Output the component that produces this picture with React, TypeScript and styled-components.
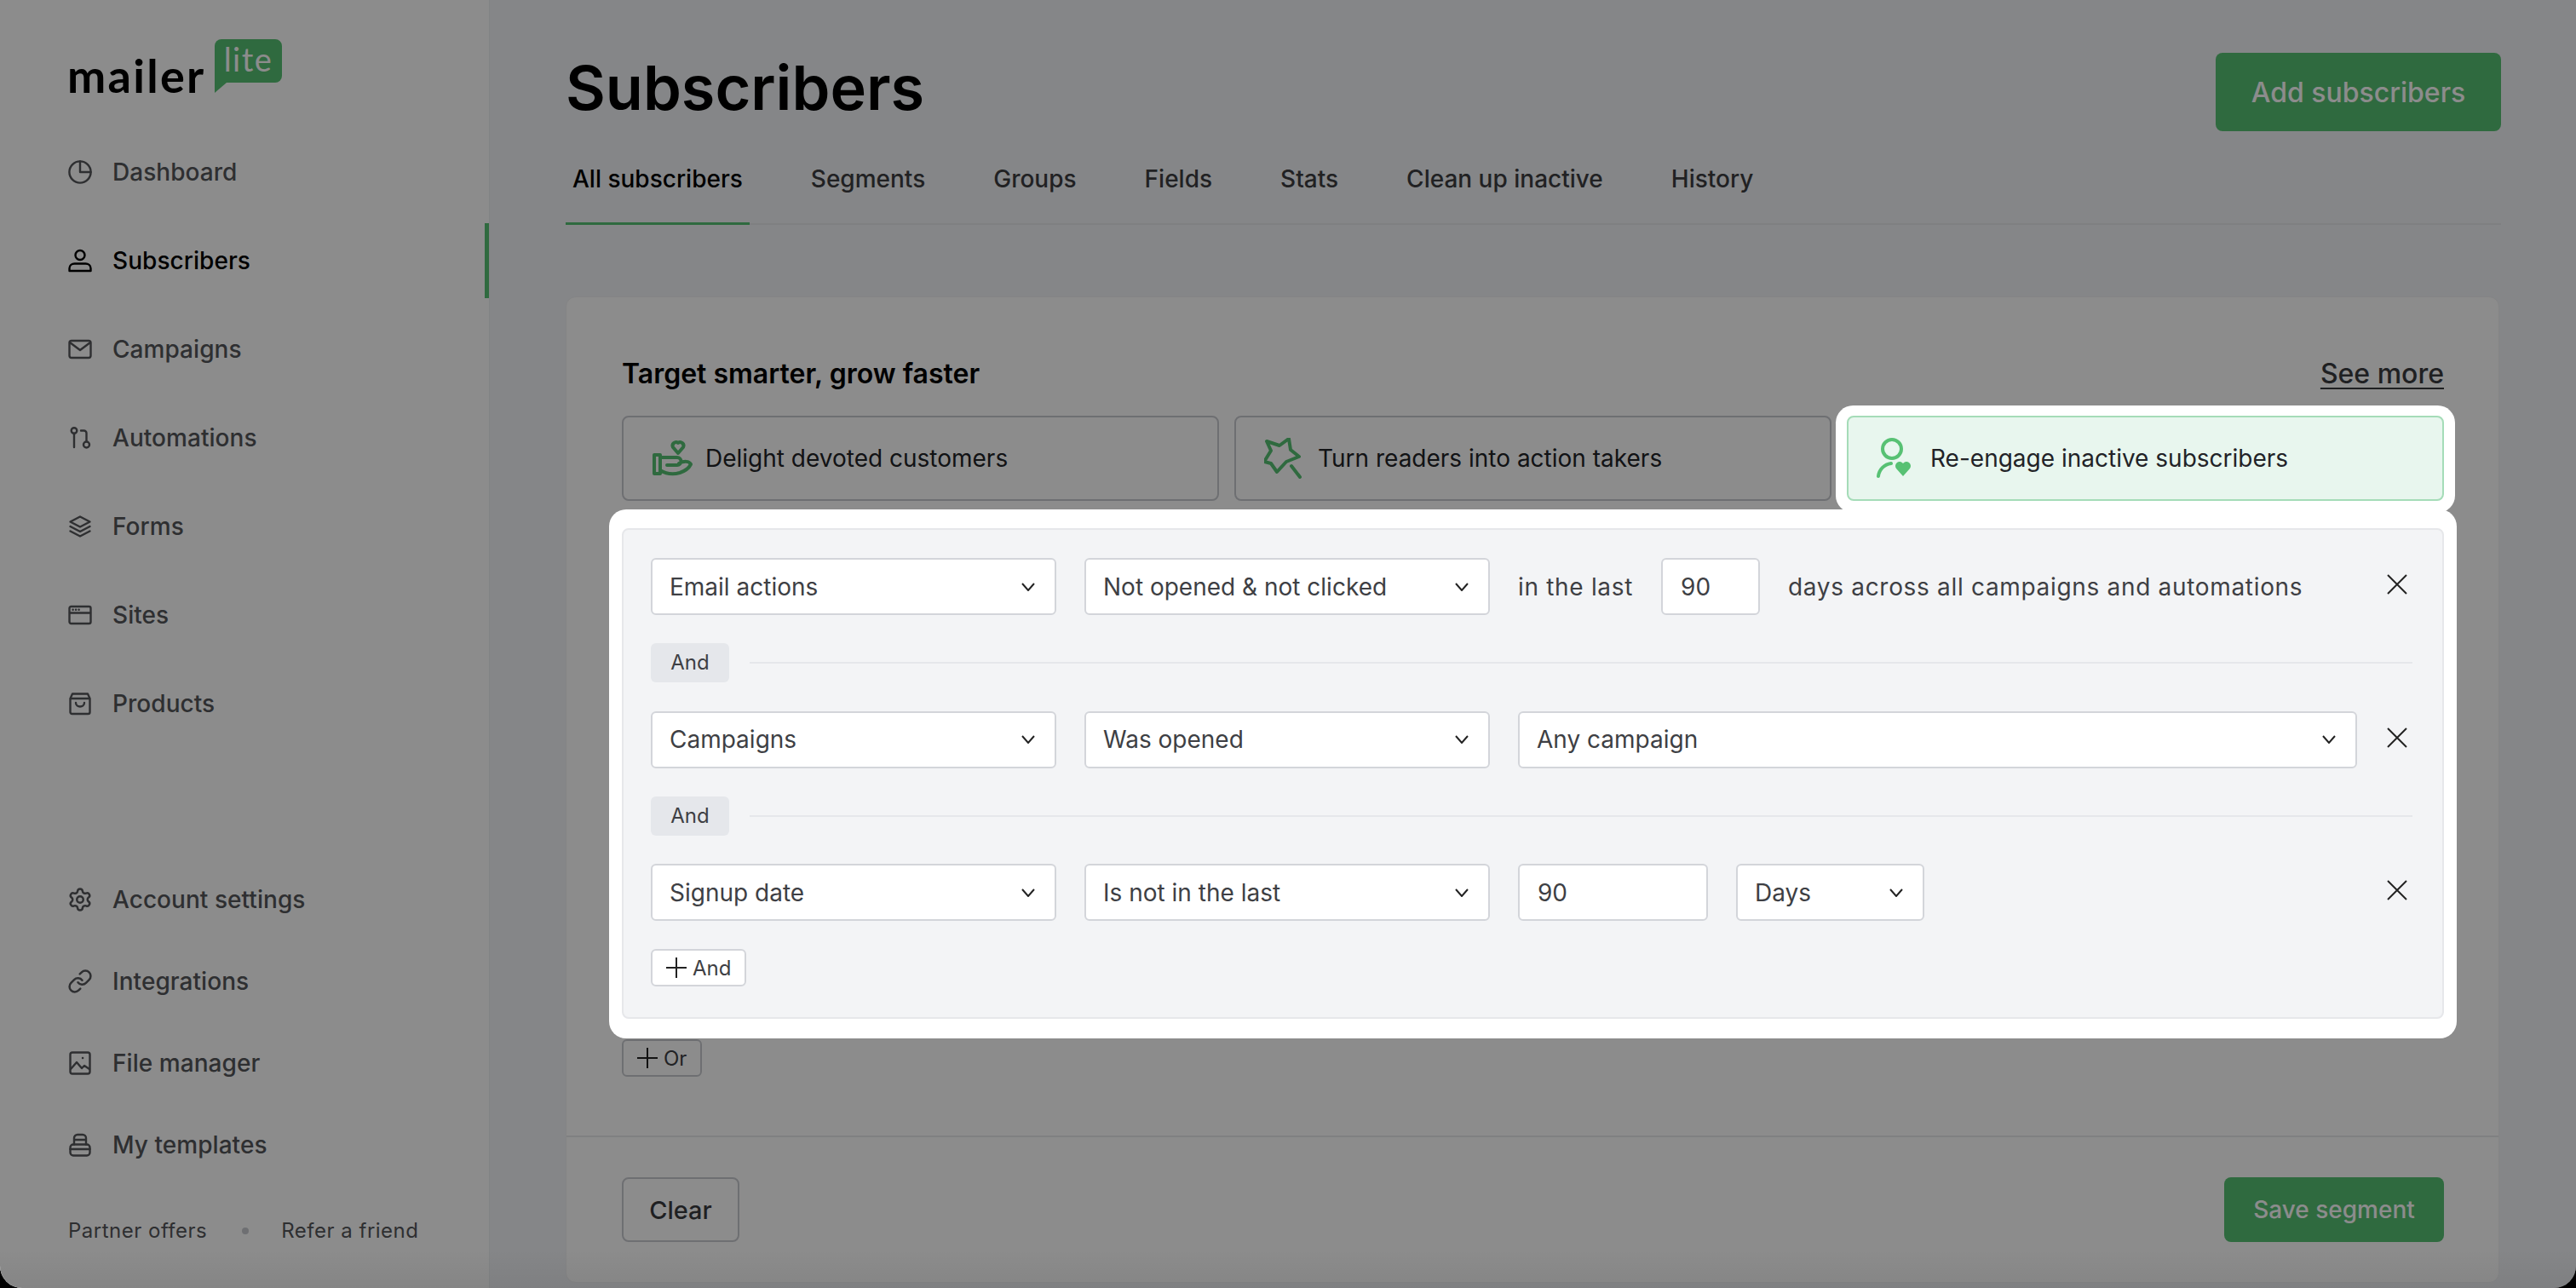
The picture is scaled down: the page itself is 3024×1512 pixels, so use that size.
import React from "react";
import styled, { createGlobalStyle } from "styled-components";
import { Settings, Link as LinkIcon } from "lucide-react";

const Global = createGlobalStyle`
  html, body { margin: 0; padding: 0; background: #000; overflow: hidden; }
  * { box-sizing: border-box; }
  body { font-family: Inter, "Liberation Sans", sans-serif; }
`;

const Frame = styled.div`
  position: relative;
  width: 3024px;
  height: 1512px;
  display: flex;
  overflow: hidden;
  background: #f2f4f7;
  border-radius: 0 0 26px 26px;
`;

const Overlay = styled.div`
  position: absolute;
  inset: 0;
  z-index: 10;
  background: linear-gradient(to bottom, rgba(0, 0, 0, 0) 97%, rgba(0, 0, 0, 0.05) 100%), rgba(0, 0, 0, 0.45);
`;

const Sidebar = styled.aside`
  width: 575px;
  flex: none;
  height: 100%;
  background: #fff;
  border-right: 1px solid #eceef0;
  display: flex;
  flex-direction: column;
`;

const LogoRow = styled.div`
  height: 158px;
  padding: 46px 0 0 79px;
  display: flex;
  align-items: flex-start;
`;

const LogoWord = styled.span`
  width: 173px;
  flex: none;
  font-family: Lato, sans-serif;
  font-weight: 700;
  font-size: 54px;
  line-height: 58px;
  letter-spacing: 2.3px;
  color: #000;
  margin-top: 14px;
`;

const LogoBubble = styled.span`
  position: relative;
  width: 79px;
  height: 51px;
  background: #57c173;
  border-radius: 8px 8px 8px 0;
  color: #fff;
  font-family: Lato, sans-serif;
  font-size: 38px;
  line-height: 46px;
  letter-spacing: 1.5px;
  text-align: center;
  &::after {
    content: "";
    position: absolute;
    left: 0;
    top: 100%;
    border-top: 12px solid #57c173;
    border-right: 14px solid transparent;
  }
`;

const NavList = styled.nav<{ $gap: number }>`
  display: flex;
  flex-direction: column;
  gap: ${(p) => p.$gap}px;
`;

const BottomNav = styled(NavList)`
  margin-top: auto;
`;

const NavItem = styled.a<{ $active?: boolean }>`
  height: 88px;
  display: flex;
  align-items: center;
  gap: 24px;
  padding-left: 80px;
  font-size: 28px;
  font-weight: 450;
  letter-spacing: 0.05px;
  color: ${(p) => (p.$active ? "#000" : "#55565a")};
  border-right: 5px solid ${(p) => (p.$active ? "#57c173" : "transparent")};
  svg {
    flex: none;
    width: 28px;
    height: 28px;
    stroke: currentColor;
    fill: none;
    stroke-width: 2.4;
    stroke-linecap: round;
    stroke-linejoin: round;
  }
`;

const GearIcon = styled(Settings)`
  && {
    width: 30px;
    height: 30px;
    margin: -1px;
    stroke-width: 2;
  }
`;

const ChainIcon = styled(LinkIcon)`
  && {
    width: 30px;
    height: 30px;
    margin: -1px;
    stroke-width: 2;
  }
`;

const SideFooter = styled.div`
  height: 95px;
  margin-top: 29px;
  padding: 4px 0 0 80px;
  display: flex;
  align-items: flex-start;
  font-size: 24px;
  letter-spacing: 0.5px;
  color: #55565a;
  line-height: 48px;
`;

const FooterDot = styled.i`
  width: 8px;
  height: 8px;
  border-radius: 50%;
  background: #c9cbd0;
  margin: 20px 38px 0 41px;
`;

const Main = styled.main`
  flex: 1;
  min-width: 0;
  padding: 62px 88px 0 89px;
  display: flex;
  flex-direction: column;
`;

const PageHead = styled.header`
  height: 92px;
  display: flex;
  align-items: center;
  justify-content: space-between;
`;

const Title = styled.h1`
  margin: 0 0 10px;
  font-size: 72px;
  line-height: 80px;
  font-weight: 600;
  color: #000;
`;

const PrimaryButton = styled.button<{ $w: number; $h: number }>`
  width: ${(p) => p.$w}px;
  height: ${(p) => p.$h}px;
  border: 0;
  border-radius: 8px;
  background: #57c173;
  color: #fff;
  font: ${(p) => (p.$h > 80 ? "500 32px" : "450 28px")} Inter, sans-serif;
`;

const Tabs = styled.div`
  margin-top: 16px;
  height: 94px;
  display: flex;
  gap: 64px;
  border-bottom: 2px solid #e7e9ec;
`;

const Tab = styled.a<{ $active?: boolean }>`
  height: 94px;
  padding: 0 8px;
  line-height: 80px;
  font-size: 28px;
  font-weight: 500;
  color: ${(p) => (p.$active ? "#000" : "#3c3d41")};
  border-bottom: 3px solid ${(p) => (p.$active ? "#57c173" : "transparent")};
`;

const Card = styled.section`
  margin-top: 84px;
  width: 2270px;
  background: #fff;
  border-radius: 12px;
  border: 1px solid #f0f1f3;
`;

const CardBody = styled.div`
  padding: 67px 64px 69px 65px;
`;

const CardHead = styled.div`
  height: 44px;
  display: flex;
  align-items: center;
  justify-content: space-between;
`;

const CardTitle = styled.h2`
  margin: 0;
  font-size: 32px;
  font-weight: 600;
  color: #000;
`;

const SeeMore = styled.a`
  font-size: 32px;
  font-weight: 500;
  color: #3a3b3f;
  text-decoration: underline;
  text-underline-offset: 5px;
  text-decoration-thickness: 2px;
`;

const Goals = styled.div`
  margin-top: 28px;
  display: grid;
  grid-template-columns: repeat(3, 1fr);
  gap: 18px;
`;

const Goal = styled.div<{ $on?: boolean }>`
  position: relative;
  height: 100px;
  display: flex;
  align-items: center;
  gap: 13px;
  padding-left: 33px;
  border-radius: 8px;
  font-size: 28px;
  font-weight: 400;
  color: #222327;
  background: ${(p) => (p.$on ? "#e8f6ee" : "transparent")};
  border: 2px solid ${(p) => (p.$on ? "#a5dcb8" : "#c9cbd0")};
  ${(p) => p.$on && "z-index: 11; box-shadow: 0 1px 0 13px #fff;"}
  svg {
    flex: none;
    width: 50px;
    height: 48px;
    fill: none;
    stroke: #57c173;
    stroke-width: 4;
    stroke-linecap: round;
    stroke-linejoin: round;
  }
`;

const Spotlight = styled.div`
  position: relative;
  z-index: 11;
  margin: 10px -15px 0;
  padding: 22px 15px 23px;
  background: #fff;
  border-radius: 20px;
`;

const Panel = styled.div`
  background: #f3f4f6;
  border: 2px solid #e6e7ea;
  border-radius: 8px;
  padding: 33px 35px 36px 32px;
  display: flex;
  flex-direction: column;
  gap: 33px;
`;

const FilterRow = styled.div`
  display: flex;
  align-items: center;
  gap: 33px;
  height: 67px;
`;

const Select = styled.div<{ $w: number }>`
  width: ${(p) => p.$w}px;
  height: 67px;
  flex: none;
  display: flex;
  align-items: center;
  justify-content: space-between;
  padding: 0 23px 0 20px;
  background: #fff;
  border: 2px solid #d3d5da;
  border-radius: 6px;
  font-size: 28px;
  color: #3e3f44;
  svg {
    width: 16px;
    height: 10px;
    fill: none;
    stroke: #222;
    stroke-width: 2;
  }
`;

const Field = styled(Select)`
  padding-left: 21px;
`;

const RowText = styled.span`
  font-size: 28px;
  letter-spacing: 0.68px;
  color: #3e3f44;
  white-space: nowrap;
`;

const CloseBtn = styled.button`
  margin: 0 4px 5px auto;
  width: 28px;
  height: 28px;
  padding: 0;
  border: 0;
  background: none;
  display: flex;
  align-items: center;
  justify-content: center;
  svg {
    width: 24px;
    height: 24px;
    stroke: #222;
    stroke-width: 2;
    fill: none;
  }
`;

const AndRow = styled.div`
  display: flex;
  align-items: center;
  gap: 24px;
  height: 46.5px;
`;

const AndPill = styled.span`
  width: 92px;
  height: 46px;
  flex: none;
  border-radius: 6px;
  background: #e5e7eb;
  font-size: 24px;
  line-height: 46px;
  text-align: center;
  color: #3e3f44;
`;

const Rule = styled.div`
  flex: 1;
  height: 2px;
  background: #e5e7eb;
`;

const AddBtn = styled.button<{ $muted?: boolean }>`
  align-self: flex-start;
  height: 44px;
  display: inline-flex;
  align-items: center;
  gap: 6px;
  padding: 0 16px 0 15px;
  background: ${(p) => (p.$muted ? "transparent" : "#fff")};
  border: 2px solid ${(p) => (p.$muted ? "#c9cbd0" : "#d3d5da")};
  border-radius: 6px;
  font: 400 24px Inter, sans-serif;
  color: #3e3f44;
  svg {
    width: 26px;
    height: 26px;
    stroke: #222;
    stroke-width: 2;
    fill: none;
  }
`;

const OrBtn = styled(AddBtn)`
  display: flex;
  margin-top: 1px;
`;

const CardFooter = styled.div`
  border-top: 2px solid #e7e9ec;
  padding: 47px 64px 47px 65px;
  display: flex;
  align-items: center;
  justify-content: space-between;
`;

const ClearBtn = styled.button`
  width: 138px;
  height: 76px;
  background: transparent;
  border: 2px solid #c9cbd0;
  border-radius: 8px;
  font: 500 29px Inter, sans-serif;
  color: #3a3b3f;
`;

const Chevron = () => (
  <svg viewBox="0 0 16 10"><path d="M1 1l7 8 7-8" /></svg>
);
const Cross = () => (
  <svg viewBox="0 0 24 24"><path d="M1 1l22 22M23 1L1 23" /></svg>
);
const Plus = () => (
  <svg viewBox="0 0 26 26"><path d="M13 1v24M1 13h24" /></svg>
);

const PieIcon = () => (
  <svg viewBox="0 0 28 28"><circle cx="14" cy="14" r="12.6" /><path d="M14 1.500V14h12.500" /></svg>
);
const UserIcon = () => (
  <svg viewBox="0 0 28 28"><circle cx="14" cy="7.500" r="5.500" /><path d="M1.500 26v-3c0-3.500 3-5.500 6-5.500h13c3 0 6 2 6 5.500v3z" /></svg>
);
const MailIcon = () => (
  <svg viewBox="0 0 28 28"><rect x="1.500" y="4" width="25" height="20" rx="2.500" /><path d="M2 6l12 9 12-9" /></svg>
);
const FlowIcon = () => (
  <svg viewBox="0 0 28 28"><circle cx="7" cy="5.500" r="3.300" /><path d="M7 9v16M15 5.500h3.500a3 3 0 0 1 3 3V18" /><circle cx="21.500" cy="22" r="3.500" /></svg>
);
const LayersIcon = () => (
  <svg viewBox="0 0 28 28"><path d="M14 2.500l11.500 6L14 14.500 2.500 8.500z" /><path d="M2.500 14L14 20l11.500-6M2.500 19.500L14 25.500l11.500-6" /></svg>
);
const SiteIcon = () => (
  <svg viewBox="0 0 28 28"><rect x="1.500" y="4" width="25" height="20" rx="2" /><path d="M2 11.500h24M5.500 7.800h.2M9 7.800h.2M12.500 7.800h.2" /></svg>
);
const BagIcon = () => (
  <svg viewBox="0 0 28 28"><path d="M5 2.500h18l2.500 5.500v16a2 2 0 0 1-2 2h-19a2 2 0 0 1-2-2V8z" /><path d="M3 8h22M9 13c0 6 10 6 10 0" /></svg>
);
const ImageIcon = () => (
  <svg viewBox="0 0 28 28"><rect x="2.500" y="1.500" width="23" height="25" rx="2.500" /><path d="M3 21l7-8 6 7 3-3 6 4M17 8h.2" /></svg>
);
const TemplateIcon = () => (
  <svg viewBox="0 0 28 28"><rect x="2.500" y="13.500" width="23" height="13" rx="3.500" /><path d="M7 13.500V6a4 4 0 0 1 4-4h6a4 4 0 0 1 4 4v7.500M7 8h14M2.500 19h23" /></svg>
);
const HandHeart = () => (
  <svg viewBox="0 0 50 48">
    <path d="M3 20h7v22H3zM10 23h20a4 4 0 0 1 0 9H18M10 38c8 5 16 5 23 3 6-2 11-6 13-10-2-4-8-4-14-1" />
    <path d="M31 18l-6-7a4 4 0 0 1 6-5 4 4 0 0 1 6 5z" />
  </svg>
);
const StarWand = () => (
  <svg viewBox="0 0 50 48">
    <path d="M3 4l15 5L29 1l2 13 10 8-15 6-11 12-7-10-8-2 8-13z" />
    <path d="M32 33l10 13" />
  </svg>
);
const PersonHeart = () => (
  <svg viewBox="0 0 50 48">
    <circle cx="18" cy="13" r="11" />
    <path d="M2 45c1-8 7-14 15-15" />
    <path d="M31 45l-8-9a5 5 0 0 1 8-6 5 5 0 0 1 8 6z" fill="#57c173" stroke="none" />
  </svg>
);

const filterTail = (
  <AndRow>
    <AndPill>And</AndPill>
    <Rule />
  </AndRow>
);

export default function App() {
  return (
    <Frame>
      <Global />
      <Overlay />
      <Sidebar>
        <LogoRow>
          <LogoWord>mailer</LogoWord>
          <LogoBubble>lite</LogoBubble>
        </LogoRow>
        <NavList $gap={16}>
          <NavItem><PieIcon />Dashboard</NavItem>
          <NavItem $active><UserIcon />Subscribers</NavItem>
          <NavItem><MailIcon />Campaigns</NavItem>
          <NavItem><FlowIcon />Automations</NavItem>
          <NavItem><LayersIcon />Forms</NavItem>
          <NavItem><SiteIcon />Sites</NavItem>
          <NavItem><BagIcon />Products</NavItem>
        </NavList>
        <BottomNav $gap={8}>
          <NavItem><GearIcon />Account settings</NavItem>
          <NavItem><ChainIcon />Integrations</NavItem>
          <NavItem><ImageIcon />File manager</NavItem>
          <NavItem><TemplateIcon />My templates</NavItem>
        </BottomNav>
        <SideFooter>
          <span>Partner offers</span>
          <FooterDot />
          <span>Refer a friend</span>
        </SideFooter>
      </Sidebar>
      <Main>
        <PageHead>
          <Title>Subscribers</Title>
          <PrimaryButton $w={335} $h={92}>Add subscribers</PrimaryButton>
        </PageHead>
        <Tabs>
          <Tab $active>All subscribers</Tab>
          <Tab>Segments</Tab>
          <Tab>Groups</Tab>
          <Tab>Fields</Tab>
          <Tab>Stats</Tab>
          <Tab>Clean up inactive</Tab>
          <Tab>History</Tab>
        </Tabs>
        <Card>
          <CardBody>
            <CardHead>
              <CardTitle>Target smarter, grow faster</CardTitle>
              <SeeMore>See more</SeeMore>
            </CardHead>
            <Goals>
              <Goal><HandHeart />Delight devoted customers</Goal>
              <Goal><StarWand />Turn readers into action takers</Goal>
              <Goal $on><PersonHeart />Re-engage inactive subscribers</Goal>
            </Goals>
            <Spotlight>
              <Panel>
                <FilterRow>
                  <Select $w={476}>Email actions<Chevron /></Select>
                  <Select $w={476}>Not opened &amp; not clicked<Chevron /></Select>
                  <RowText>in the last</RowText>
                  <Field $w={116}>90</Field>
                  <RowText>days across all campaigns and automations</RowText>
                  <CloseBtn><Cross /></CloseBtn>
                </FilterRow>
                {filterTail}
                <FilterRow>
                  <Select $w={476}>Campaigns<Chevron /></Select>
                  <Select $w={476}>Was opened<Chevron /></Select>
                  <Select $w={985}>Any campaign<Chevron /></Select>
                  <CloseBtn><Cross /></CloseBtn>
                </FilterRow>
                {filterTail}
                <FilterRow>
                  <Select $w={476}>Signup date<Chevron /></Select>
                  <Select $w={476}>Is not in the last<Chevron /></Select>
                  <Field $w={223}>90</Field>
                  <Select $w={221}>Days<Chevron /></Select>
                  <CloseBtn><Cross /></CloseBtn>
                </FilterRow>
                <AddBtn><Plus />And</AddBtn>
              </Panel>
            </Spotlight>
            <OrBtn $muted><Plus />Or</OrBtn>
          </CardBody>
          <CardFooter>
            <ClearBtn>Clear</ClearBtn>
            <PrimaryButton $w={258} $h={76}>Save segment</PrimaryButton>
          </CardFooter>
        </Card>
      </Main>
    </Frame>
  );
}
